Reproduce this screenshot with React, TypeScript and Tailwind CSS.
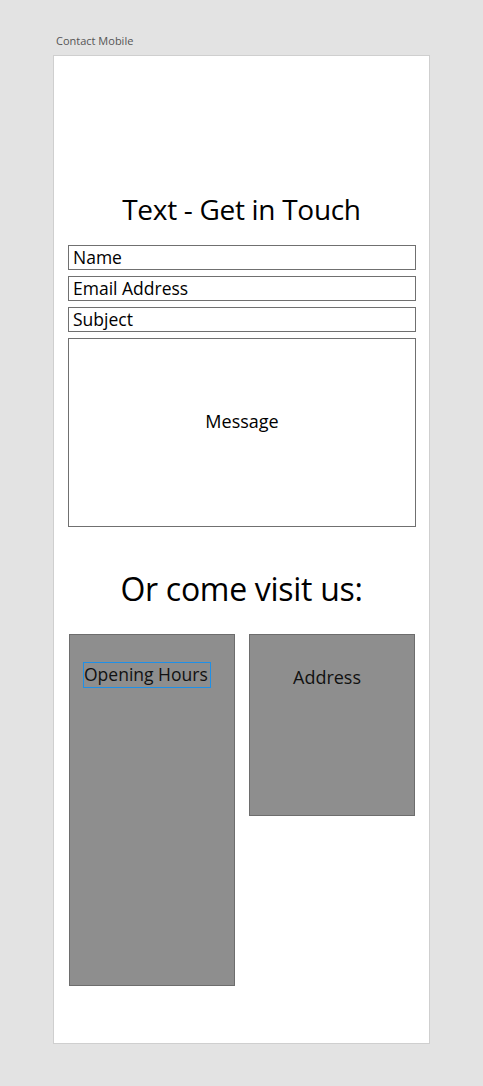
const font = { fontFamily: '"Open Sans", "Noto Sans", sans-serif' }

function Field({ label }: { label: string }) {
  return (
    <div className="flex h-[25px] items-center border border-[#707070] pl-[4px] text-[17.5px] leading-none text-black">
      {label}
    </div>
  )
}

export default function App() {
  return (
    <div className="min-h-[1086px] w-full bg-[#e3e3e3] pt-[34px]" style={font}>
      <div className="ml-[56px] text-[11px] leading-[14px] text-[#555]">Contact Mobile</div>
      <div className="ml-[53px] mt-[7px] flex h-[989px] w-[377px] flex-col border border-[#cfcfcf] bg-white">
        <h1 className="mt-[135px] text-center text-[28px] leading-[36px] tracking-[-0.3px] text-black">
          Text - Get in Touch
        </h1>

        <div className="ml-[14px] mt-[18px] flex w-[348px] flex-col gap-[6px]">
          <Field label="Name" />
          <Field label="Email Address" />
          <Field label="Subject" />
          <div className="h-[189px] border border-[#707070] pt-[70px] text-center text-[18px] leading-[24px] text-black">
            Message
          </div>
        </div>

        <h2 className="mt-[42px] text-center text-[32px] leading-[40px] tracking-[-0.3px] text-black">
          Or come visit us:
        </h2>

        <div className="ml-[15px] mt-[25px] flex items-start gap-[14px]">
          <div className="h-[352px] w-[166px] border border-[#6d6d6d] bg-[#8e8e8e] pl-[13px] pt-[27px]">
            <div className="flex h-[26px] w-[128px] items-center border border-[#1e90e8] text-[17.5px] leading-none whitespace-nowrap text-[#111]">
              Opening Hours
            </div>
          </div>
          <div className="h-[182px] w-[166px] border border-[#6d6d6d] bg-[#8e8e8e] pl-[43px] pt-[30px] text-[18px] leading-[24px] text-[#111]">
            Address
          </div>
        </div>
      </div>
    </div>
  )
}
